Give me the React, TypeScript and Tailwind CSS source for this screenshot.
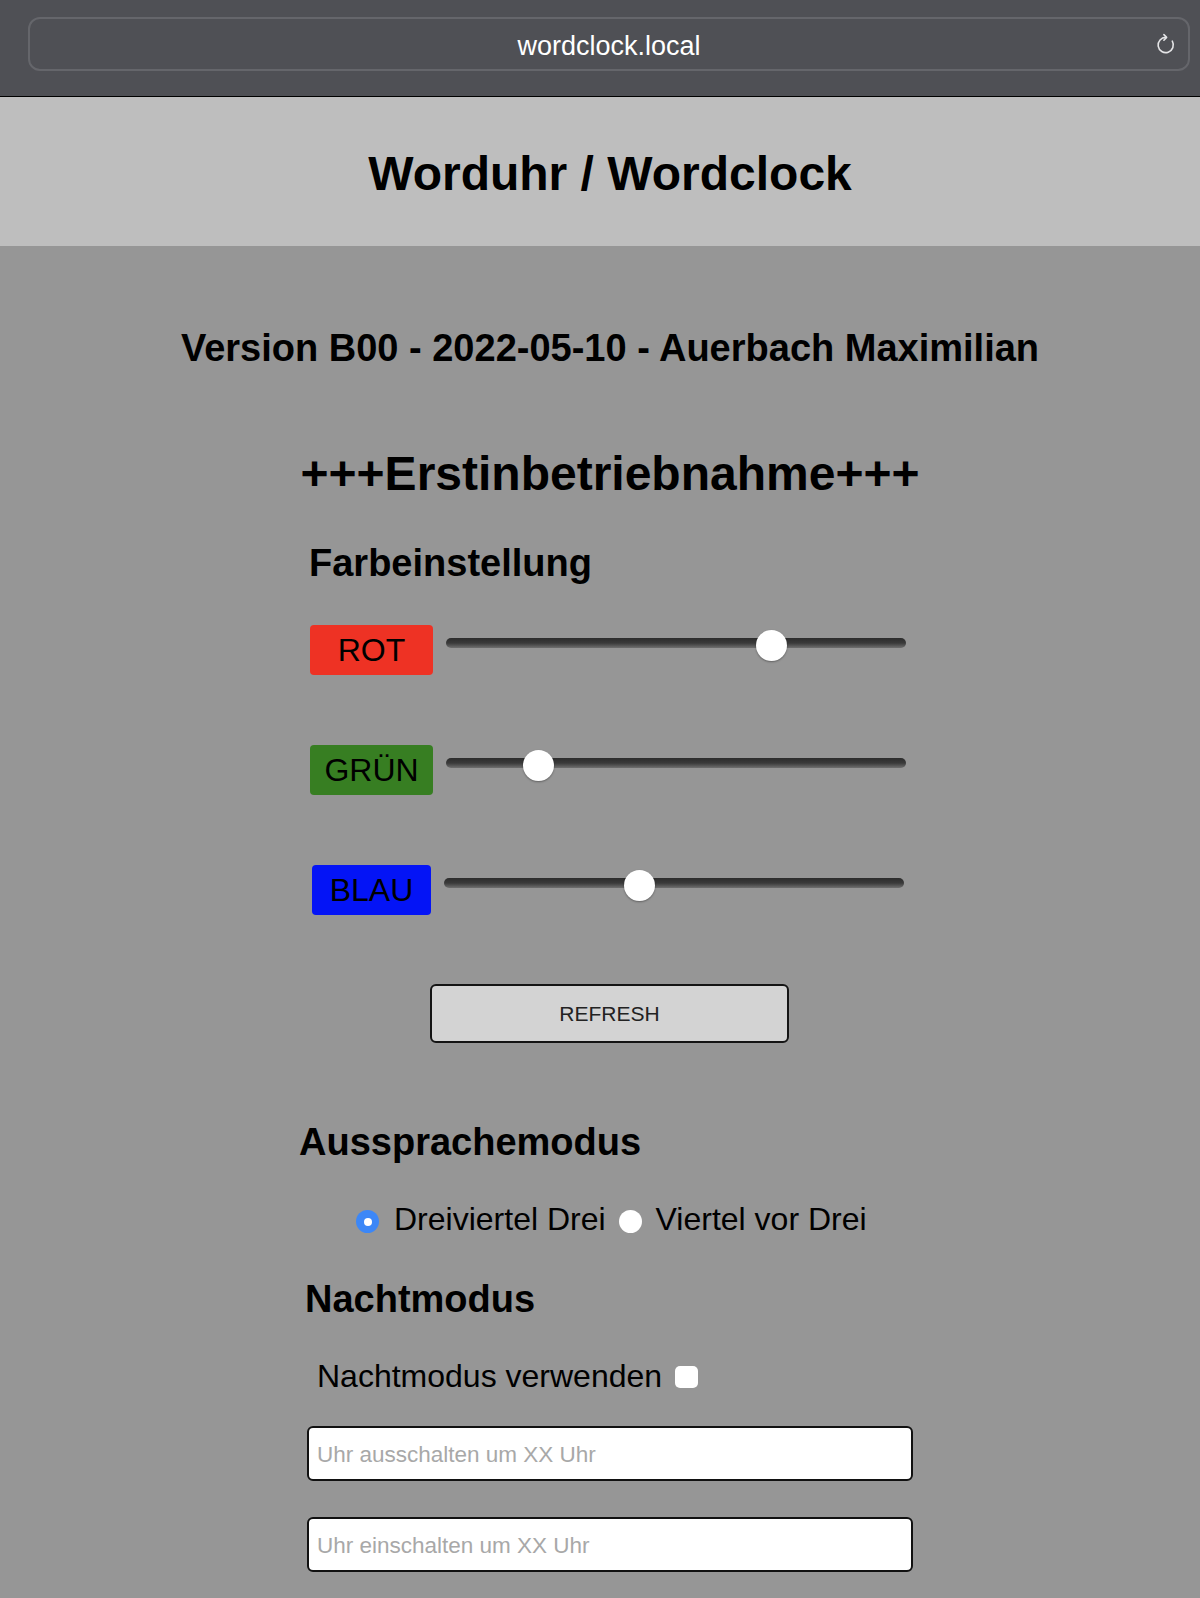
import { useState } from 'react'

const COLORS = [
  { key: 'rot', label: 'ROT', box: 'w-[123px] bg-[#ee3224]', value: 184 },
  { key: 'gruen', label: 'GRÜN', box: 'w-[123px] bg-[#377e22]', value: 46 },
  { key: 'blau', label: 'BLAU', box: 'ml-[2px] w-[119px] bg-[#0414f6]', value: 107 },
]

function ReloadIcon() {
  return (
    <svg width="24" height="24" viewBox="0 0 24 24" fill="none" stroke="#e4e4e6" strokeWidth="1.6" strokeLinecap="round" strokeLinejoin="round">
      <path d="M18.3 9.2 A7.6 7.6 0 1 1 12 5.4" />
      <path d="M9.9 2.6 L12.6 5.4 L9.9 8.2" />
    </svg>
  )
}

function Slider({ value }: { value: number }) {
  const left = (value / 255) * (460 - 31)
  return (
    <div className="relative ml-[13px] mt-[13px] h-[10px] w-[460px] rounded-full bg-gradient-to-b from-[#2c2c2c] via-[#3a3a3a] to-[#707070]">
      <div
        className="absolute top-[-8px] h-[31px] w-[31px] rounded-full bg-white shadow-[0_1px_2px_rgba(0,0,0,0.35)]"
        style={{ left }}
      />
    </div>
  )
}

export default function App() {
  const [mode, setMode] = useState<'dreiviertel' | 'viertel'>('dreiviertel')
  const [night, setNight] = useState(false)

  return (
    <div className="min-h-[1598px] w-[1200px] overflow-hidden bg-[#969696] font-['Liberation_Sans',Arial,sans-serif] text-black">
      <div className="w-[1220px]">
        {/* Browser bar */}
        <div className="h-[96px] bg-[#4f5055] pl-[28px] pr-[30px] pt-[17px]">
          <div className="relative flex h-[54px] items-center justify-center rounded-[12px] border-2 border-[#65666b] pt-[4px]">
            <span className="text-[27px] leading-none text-white">wordclock.local</span>
            <div className="absolute right-[10px] top-[13px]">
              <ReloadIcon />
            </div>
          </div>
        </div>
        <div className="h-px bg-black" />

        {/* Banner */}
        <div className="h-[149px] bg-[#bebebe] pt-[53px]">
          <h1 className="text-center text-[48px] font-bold leading-none">Worduhr / Wordclock</h1>
        </div>

        {/* Content */}
        <div className="pb-[26px]">
          <h2 className="mt-[83px] text-center text-[38px] font-bold leading-none">
            Version B00 - 2022-05-10 - Auerbach Maximilian
          </h2>

          <h2 className="mt-[83px] text-center text-[48px] font-bold leading-none">+++Erstinbetriebnahme+++</h2>

          <h3 className="mt-[46px] pl-[309px] text-[38px] font-bold leading-none">Farbeinstellung</h3>

          <div className="mt-[43px] flex flex-col gap-[70px] pl-[310px]">
            {COLORS.map(c => (
              <div key={c.key} className="flex items-start">
                <div className={`flex h-[50px] items-center justify-center rounded-[4px] text-[32px] leading-none ${c.box}`}>
                  {c.label}
                </div>
                <Slider value={c.value} />
              </div>
            ))}
          </div>

          <button className="ml-[430px] mt-[69px] flex h-[59px] w-[359px] items-center justify-center rounded-[6px] border-2 border-[#141414] bg-[#d3d3d3] text-[21px] leading-none text-[#222]">
            REFRESH
          </button>

          <h3 className="mt-[80px] pl-[299px] text-[38px] font-bold leading-none">Aussprachemodus</h3>

          <div className="mt-[42px] flex items-start pl-[356px] text-[32px] leading-none">
            <button
              onClick={() => setMode('dreiviertel')}
              className={`mt-[7px] flex h-[23px] w-[23px] items-center justify-center rounded-full ${mode === 'dreiviertel' ? 'bg-[#3c87f7]' : 'bg-white'}`}
            >
              {mode === 'dreiviertel' && <span className="h-[8px] w-[8px] rounded-full bg-white" />}
            </button>
            <span className="ml-[15px]">Dreiviertel Drei</span>
            <button
              onClick={() => setMode('viertel')}
              className={`ml-[13px] mt-[7px] flex h-[23px] w-[23px] items-center justify-center rounded-full ${mode === 'viertel' ? 'bg-[#3c87f7]' : 'bg-white'}`}
            >
              {mode === 'viertel' && <span className="h-[8px] w-[8px] rounded-full bg-white" />}
            </button>
            <span className="ml-[14px]">Viertel vor Drei</span>
          </div>

          <h3 className="mt-[45px] pl-[305px] text-[38px] font-bold leading-none">Nachtmodus</h3>

          <div className="mt-[42px] flex items-start pl-[317px] text-[32px] leading-none">
            <span>Nachtmodus verwenden</span>
            <button
              onClick={() => setNight(n => !n)}
              className={`ml-[13px] mt-[6px] h-[22px] w-[23px] rounded-[5px] ${night ? 'bg-[#3c87f7]' : 'bg-white'}`}
            />
          </div>

          <div className="mt-[34px] flex flex-col gap-[36px] pl-[307px]">
            <input
              placeholder="Uhr ausschalten um XX Uhr"
              className="h-[55px] w-[606px] rounded-[6px] border-2 border-[#111] bg-white pl-[8px] pt-[3px] text-[22.5px] outline-none placeholder:text-[#a8a8a8]"
            />
            <input
              placeholder="Uhr einschalten um XX Uhr"
              className="h-[55px] w-[606px] rounded-[6px] border-2 border-[#111] bg-white pl-[8px] pt-[3px] text-[22.5px] outline-none placeholder:text-[#a8a8a8]"
            />
          </div>
        </div>
      </div>
    </div>
  )
}
